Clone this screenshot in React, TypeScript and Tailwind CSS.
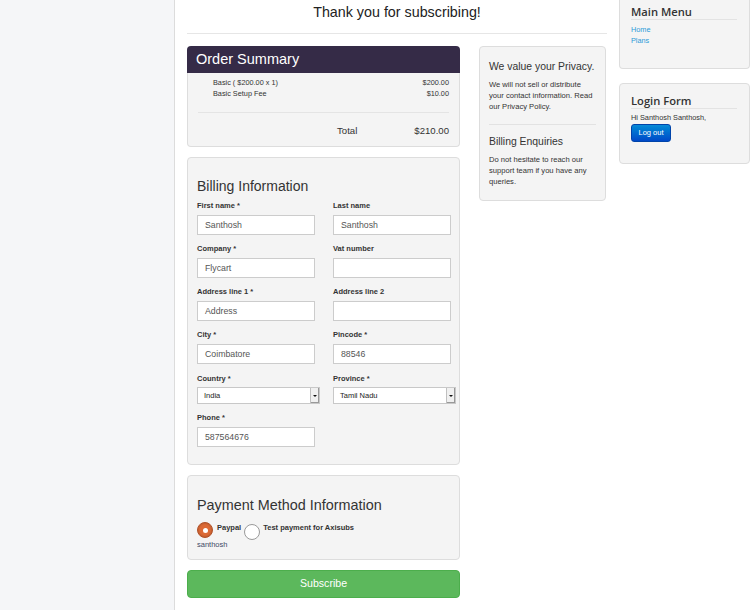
type FieldProps = {
  label: string
  value?: string
  required?: boolean
}

function Field({ label, value, required }: FieldProps) {
  return (
    <div>
      <div className="h-[10px] text-[7.5px] font-bold leading-[10px] text-[#333]">
        {label}
        {required ? ' *' : ''}
      </div>
      <div className="mt-[4px] h-[20px] w-[118px] border border-[#cccccc] bg-white pl-[7px] text-[8.75px] leading-[18px] text-[#555]">
        {value}
      </div>
    </div>
  )
}

function SelectField({ label, value }: { label: string; value: string }) {
  return (
    <div>
      <div className="h-[10px] text-[7.5px] font-bold leading-[10px] text-[#333]">{label} *</div>
      <div className="mt-[3px] flex h-[17px] w-[123px] border border-[#c8c8c8] bg-white">
        <div className="flex-1 pl-[6px] text-[7.5px] leading-[15px] text-[#222]">{value}</div>
        <div className="flex w-[9px] items-center justify-center border-l border-[#c0c0c0] bg-[#f0f0f0] shadow-[inset_-1px_-1px_0_#999]">
          <svg width="4" height="2" viewBox="0 0 4 2">
            <path d="M0 0h4L2 2z" fill="#111" />
          </svg>
        </div>
      </div>
    </div>
  )
}

export default function App() {
  return (
    <div className="flex min-h-[610px] w-[752px] bg-white font-['Liberation_Sans',Arial,sans-serif] text-[#333]">
      <div className="w-[175px] shrink-0 border-r border-[#dcdcdc] bg-[#f5f6f8]" />

      <div className="ml-[12px] w-[420px] shrink-0">
        <div className="h-[34px] border-b border-[#e6e6e6] pt-[2px] text-center text-[14.3px] leading-[20px] text-[#222]">
          Thank you for subscribing!
        </div>

        <div className="mt-[12px] flex items-start gap-[19px]">
          <div className="w-[273px] shrink-0">
            {/* order summary */}
            <div>
              <div className="h-[27px] rounded-t-[4px] bg-[#352b47] px-[9px] text-[14.5px] leading-[27px] text-white">
                Order Summary
              </div>
              <div className="rounded-b-[4px] border border-t-0 border-[#dddddd] bg-[#f4f4f4] px-[10px] pt-[4px] pb-[8px]">
                <div className="pl-[15px] text-[7.3px] leading-[11px] text-[#333]">
                  <div className="flex justify-between">
                    <span>Basic ( $200.00 x 1)</span>
                    <span>$200.00</span>
                  </div>
                  <div className="flex justify-between">
                    <span>Basic Setup Fee</span>
                    <span>$10.00</span>
                  </div>
                </div>
                <div className="mt-[13px] border-t border-[#e4e4e4]" />
                <div className="mt-[11px] flex h-[14px] justify-end text-[9.6px] leading-[14px] text-[#333]">
                  <span>Total</span>
                  <span className="ml-[57px]">$210.00</span>
                </div>
              </div>
            </div>

            {/* billing */}
            <div className="mt-[10px] rounded-[4px] border border-[#dddddd] bg-[#f4f4f4] px-[9px] pt-[18px] pb-[17px]">
              <div className="text-[14px] leading-[20px] text-[#333]">Billing Information</div>
              <div className="mt-[5px] grid grid-cols-[136px_136px] gap-y-[9px]">
                <Field label="First name" required value="Santhosh" />
                <Field label="Last name" value="Santhosh" />
                <Field label="Company" required value="Flycart" />
                <Field label="Vat number" />
                <Field label="Address line 1" required value="Address" />
                <Field label="Address line 2" />
                <Field label="City" required value="Coimbatore" />
                <Field label="Pincode" required value="88546" />
                <div className="pt-[1px]">
                  <SelectField label="Country" value="India" />
                </div>
                <div className="pt-[1px]">
                  <SelectField label="Province" value="Tamil Nadu" />
                </div>
                <Field label="Phone" required value="587564676" />
              </div>
            </div>

            {/* payment */}
            <div className="mt-[10px] rounded-[4px] border border-[#dddddd] bg-[#f4f4f4] px-[9px] pt-[19px] pb-[9px]">
              <div className="text-[14.4px] leading-[20px] text-[#333]">Payment Method Information</div>
              <div className="mt-[7px] flex items-start">
                <div className="flex h-[16px] w-[16px] items-center justify-center rounded-full border border-[#b0522a] bg-[#dc6a36] shadow-[inset_0_0_2px_rgba(0,0,0,0.3)]">
                  <div className="h-[5px] w-[5px] rounded-full bg-white" />
                </div>
                <span className="ml-[4px] mt-[1px] text-[7.5px] font-bold leading-[10px] text-[#333]">Paypal</span>
                <div className="ml-[3px] mt-[2px] h-[16px] w-[16px] rounded-full border border-[#9a9a9a] bg-white" />
                <span className="ml-[3px] mt-[1px] text-[7.5px] font-bold leading-[10px] text-[#333]">
                  Test payment for Axisubs
                </span>
              </div>
              <div className="text-[7.5px] leading-[10px] text-[#3d4a66]">santhosh</div>
            </div>

            <button className="mt-[10px] block h-[28px] w-full rounded-[4px] border border-[#4cae4c] bg-[#5cb85c] text-center text-[10.6px] text-white">
              Subscribe
            </button>
          </div>

          {/* privacy */}
          <div className="w-[127px] shrink-0 rounded-[4px] border border-[#dddddd] bg-[#f4f4f4] px-[9px] pt-[13px] pb-[13px]">
            <div className="whitespace-nowrap text-[10.4px] leading-[14px] text-[#333]">We value your Privacy.</div>
            <p className="mt-[4.5px] text-[7.6px] leading-[11px] text-[#333]">
              We will not sell or distribute your contact information. Read our Privacy Policy.
            </p>
            <div className="mt-[12px] border-t border-[#e2e2e2]" />
            <div className="mt-[10px] text-[10.4px] leading-[14px] text-[#333]">Billing Enquiries</div>
            <p className="mt-[5.5px] text-[7.6px] leading-[11px] text-[#333]">
              Do not hesitate to reach our support team if you have any queries.
            </p>
          </div>
        </div>
      </div>

      {/* right sidebar */}
      <div className="ml-[12px] w-[131px] shrink-0">
        <div className="rounded-b-[4px] border border-t-0 border-[#dddddd] bg-[#f4f4f4] pl-[11px] pr-[12px] pt-[5px] pb-[22px]">
          <div className="border-b border-[#e3e3e3] font-['Open_Sans',sans-serif] text-[11.2px] font-semibold leading-[14px] text-[#333]">
            Main Menu
          </div>
          <div className="mt-[3.5px] text-[7.3px] leading-[11px] text-[#2b9bd8]">
            <div>Home</div>
            <div>Plans</div>
          </div>
        </div>

        <div className="mt-[14px] rounded-[4px] border border-[#dddddd] bg-[#f4f4f4] pl-[11px] pr-[12px] pt-[10px] pb-[21px]">
          <div className="border-b border-[#e3e3e3] font-['Open_Sans',sans-serif] text-[11.2px] font-semibold leading-[14px] text-[#333]">
            Login Form
          </div>
          <div className="mt-[4px] text-[7.35px] leading-[10px] text-[#333]">Hi Santhosh Santhosh,</div>
          <button className="mt-[1px] block h-[18px] w-[40px] rounded-[3px] border border-[#0044aa] bg-gradient-to-b from-[#0a8ad6] to-[#0048c8] text-[7.5px] text-white">
            Log out
          </button>
        </div>
      </div>
    </div>
  )
}
